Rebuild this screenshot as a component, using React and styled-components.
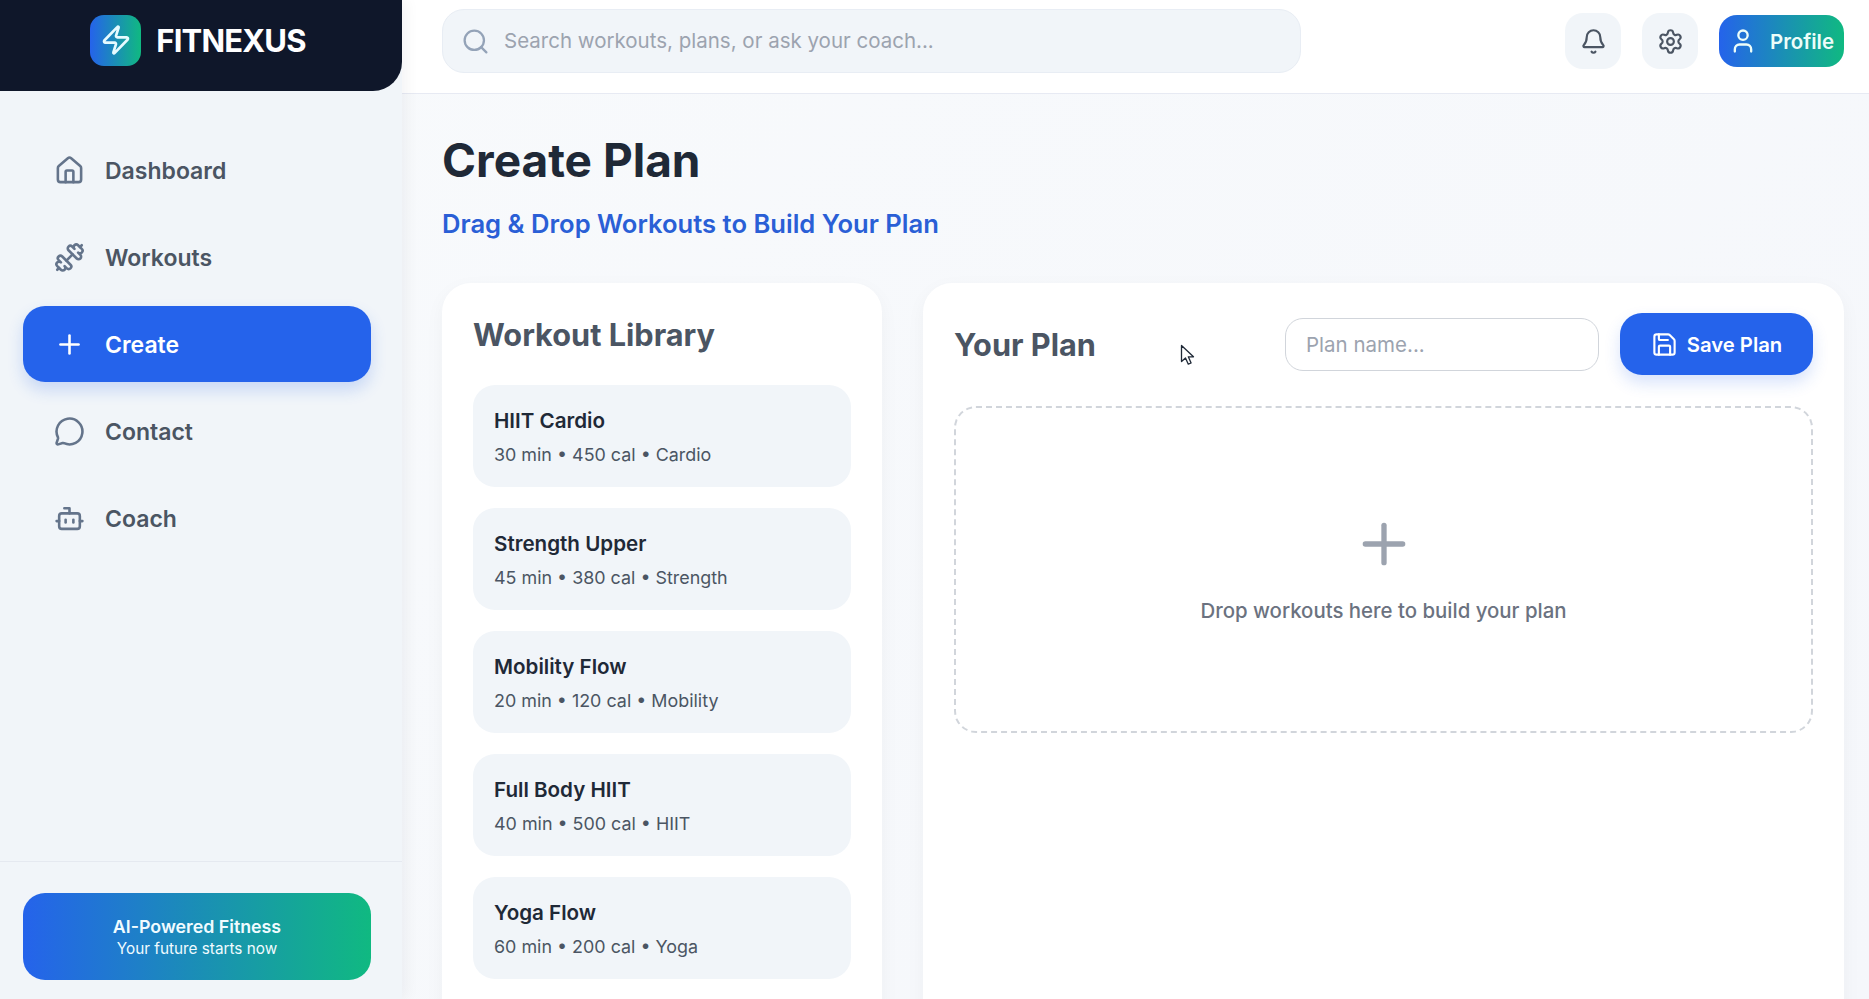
import React from 'react';
import styled, { createGlobalStyle } from 'styled-components';
import { Bell, Bot, Dumbbell, House, MessageCircle, Plus, Save, Search, Settings, User, Zap } from 'lucide-react';

const GlobalStyle = createGlobalStyle`
  * { box-sizing: border-box; }
  html, body { margin: 0; height: 100%; overflow: hidden; }
  body { font-family: Inter, "Liberation Sans", sans-serif; background: #f8fafc; }
  input { font-family: inherit; }
`;

const navItems = [
  { label: 'Dashboard', icon: House },
  { label: 'Workouts', icon: Dumbbell },
  { label: 'Create', icon: Plus, active: true },
  { label: 'Contact', icon: MessageCircle },
  { label: 'Coach', icon: Bot },
];

const workouts = [
  { name: 'HIIT Cardio', meta: '30 min • 450 cal • Cardio' },
  { name: 'Strength Upper', meta: '45 min • 380 cal • Strength' },
  { name: 'Mobility Flow', meta: '20 min • 120 cal • Mobility' },
  { name: 'Full Body HIIT', meta: '40 min • 500 cal • HIIT' },
  { name: 'Yoga Flow', meta: '60 min • 200 cal • Yoga' },
];

const App = () => {
  return (
    <Page>
      <GlobalStyle />
      <Sidebar>
        <Brand>
          <LogoMark>
            <Zap size={32} strokeWidth={2} />
          </LogoMark>
          <BrandName>FITNEXUS</BrandName>
        </Brand>
        <NavList>
          {navItems.map(({ label, icon: Icon, active }) => (
            <NavItem key={label} $active={active}>
              <Icon size={31} strokeWidth={2} />
              <span>{label}</span>
            </NavItem>
          ))}
        </NavList>
        <SidebarFooter>
          <Promo>
            <PromoTitle>AI-Powered Fitness</PromoTitle>
            <PromoText>Your future starts now</PromoText>
          </Promo>
        </SidebarFooter>
      </Sidebar>

      <Main>
        <TopBar>
          <SearchBox>
            <Search size={29} strokeWidth={1.9} />
            <SearchInput placeholder='Search workouts, plans, or ask your coach...' />
          </SearchBox>
          <TopActions>
            <IconButton>
              <Bell size={27} strokeWidth={1.9} />
            </IconButton>
            <IconButton>
              <Settings size={27} strokeWidth={1.9} />
            </IconButton>
            <ProfileButton>
              <User size={28} strokeWidth={2} />
              <span>Profile</span>
            </ProfileButton>
          </TopActions>
        </TopBar>

        <Content>
          <Title>Create Plan</Title>
          <Subtitle>Drag &amp; Drop Workouts to Build Your Plan</Subtitle>
          <Columns>
            <LibraryCard>
              <CardHeading>Workout Library</CardHeading>
              <WorkoutList>
                {workouts.map((w) => (
                  <WorkoutItem key={w.name}>
                    <WorkoutName>{w.name}</WorkoutName>
                    <WorkoutMeta>{w.meta}</WorkoutMeta>
                  </WorkoutItem>
                ))}
              </WorkoutList>
            </LibraryCard>

            <PlanCard>
              <PlanHeader>
                <PlanHeading>Your Plan</PlanHeading>
                <PlanControls>
                  <PlanInput placeholder='Plan name...' />
                  <SaveButton>
                    <Save size={27} strokeWidth={1.9} />
                    <span>Save Plan</span>
                  </SaveButton>
                </PlanControls>
              </PlanHeader>
              <DropZone>
                <Plus size={64} strokeWidth={2} />
                <DropText>Drop workouts here to build your plan</DropText>
              </DropZone>
            </PlanCard>
          </Columns>
        </Content>
      </Main>

      <Cursor width='16' height='22' viewBox='0 0 16 22'>
        <path d='M1.5 1.5v16l4-3.6 2.8 6.3 2.8-1.2-2.8-6.2h5.2z' fill='#fff' stroke='#1f2937' strokeWidth='1.3' strokeLinejoin='round' />
      </Cursor>
    </Page>
  );
};

const Page = styled.div`
  display: flex;
  width: 100%;
  height: 100vh;
  overflow: hidden;
  background: linear-gradient(135deg, #f8fafc, #f5f7fb);
`;
const Sidebar = styled.aside`
  flex: 0 0 402px;
  display: flex;
  flex-direction: column;
  height: 100%;
  background: #f1f5f9;
  box-shadow: 4px 0 14px rgba(15, 23, 42, 0.05);
  position: relative;
  z-index: 2;
`;
const Brand = styled.div`
  flex: 0 0 91px;
  display: flex;
  align-items: center;
  justify-content: center;
  gap: 15px;
  padding: 0 6px 11px 0;
  background: #0f172a;
  border-radius: 0 0 29px 0;
`;
const LogoMark = styled.div`
  width: 51px;
  height: 51px;
  display: flex;
  align-items: center;
  justify-content: center;
  border-radius: 14px;
  color: #e6fbff;
  background: linear-gradient(90deg, #2563eb, #10b981);
`;
const BrandName = styled.div`
  font-size: 31px;
  font-weight: 700;
  letter-spacing: -0.8px;
  color: #fff;
`;
const NavList = styled.nav`
  flex: 1;
  display: flex;
  flex-direction: column;
  gap: 11px;
  padding: 41px 31px 0 23px;
`;
const NavItem = styled.a`
  height: 76px;
  display: flex;
  align-items: center;
  gap: 20px;
  padding: 1px 30px 0 31px;
  border-radius: 22px;
  font-size: 23px;
  font-weight: 600;
  color: ${(p) => (p.$active ? '#fff' : '#4b5563')};
  background: ${(p) => (p.$active ? '#2563eb' : 'transparent')};
  box-shadow: ${(p) => (p.$active ? '0 8px 16px rgba(37, 99, 235, 0.2)' : 'none')};
  svg {
    flex: none;
    color: ${(p) => (p.$active ? '#fff' : '#64748b')};
  }
`;
const SidebarFooter = styled.div`
  flex: 0 0 138px;
  padding: 31px 31px 0 23px;
  border-top: 1px solid #e5e9f0;
`;
const Promo = styled.div`
  height: 87px;
  display: flex;
  flex-direction: column;
  align-items: center;
  justify-content: center;
  border-radius: 22px;
  background: linear-gradient(90deg, #2563eb, #10b981);
  color: #f0fbff;
`;
const PromoTitle = styled.div`
  font-size: 17.8px;
  line-height: 23px;
  font-weight: 600;
`;
const PromoText = styled.div`
  font-size: 15.3px;
  line-height: 21px;
  font-weight: 400;
`;
const Main = styled.main`
  flex: 1;
  min-width: 0;
  display: flex;
  flex-direction: column;
`;
const TopBar = styled.header`
  flex: 0 0 94px;
  display: flex;
  align-items: flex-start;
  justify-content: space-between;
  padding: 9px 25px 0 40px;
  background: #fff;
  border-bottom: 1px solid #e7eaf3;
`;
const SearchBox = styled.div`
  width: 859px;
  height: 64px;
  display: flex;
  align-items: center;
  gap: 14px;
  padding: 0 18px;
  background: #f1f5f9;
  border: 1px solid #e8edf4;
  border-radius: 22px;
  color: #94a3b8;
`;
const SearchInput = styled.input`
  flex: 1;
  border: 0;
  outline: 0;
  padding: 0 0 2px;
  background: transparent;
  font-size: 20.5px;
  color: #374151;
  &::placeholder {
    color: #9ca3af;
    opacity: 1;
  }
`;
const TopActions = styled.div`
  display: flex;
  align-items: center;
  gap: 21px;
  height: 64px;
`;
const IconButton = styled.button`
  width: 56px;
  height: 56px;
  display: flex;
  align-items: center;
  justify-content: center;
  padding: 0;
  border: 0;
  border-radius: 18px;
  background: #f1f5f9;
  color: #4b5563;
`;
const ProfileButton = styled.button`
  width: 125px;
  height: 52px;
  display: flex;
  align-items: center;
  gap: 13px;
  padding: 0 10px 0 10px;
  border: 0;
  border-radius: 18px;
  font-family: inherit;
  font-size: 20.4px;
  font-weight: 600;
  color: #ecfdf9;
  background: linear-gradient(90deg, #2563eb, #10b981);
  svg {
    flex: none;
  }
`;
const Content = styled.div`
  flex: 1;
  min-height: 0;
  display: flex;
  flex-direction: column;
  padding: 37px 25px 0 40px;
`;
const Title = styled.h1`
  margin: 0;
  font-size: 46px;
  line-height: 58px;
  font-weight: 700;
  color: #1f2937;
`;
const Subtitle = styled.p`
  margin: 20px 0 44px;
  font-size: 25.6px;
  line-height: 30px;
  font-weight: 600;
  color: #2a5fd6;
`;
const Columns = styled.div`
  flex: 1;
  display: grid;
  grid-template-columns: 440px 1fr;
  gap: 41px;
  min-height: 0;
`;
const Card = styled.section`
  background: #fff;
  border-radius: 29px;
  box-shadow: 0 6px 20px rgba(15, 23, 42, 0.04);
  height: 800px;
`;
const LibraryCard = styled(Card)`
  padding: 33px 31px;
`;
const PlanCard = styled(Card)`
  padding: 30px 31px;
`;
const CardHeading = styled.h2`
  margin: 0;
  font-size: 30.7px;
  line-height: 38px;
  font-weight: 700;
  color: #4b5563;
`;
const PlanHeading = styled(CardHeading)`
  padding-top: 2px;
`;
const WorkoutList = styled.div`
  display: flex;
  flex-direction: column;
  gap: 21px;
  margin-top: 31px;
`;
const WorkoutItem = styled.div`
  height: 102px;
  padding: 23px 21px;
  background: #f1f5f9;
  border-radius: 22px;
`;
const WorkoutName = styled.div`
  font-size: 20.6px;
  line-height: 26px;
  font-weight: 600;
  color: #1f2937;
`;
const WorkoutMeta = styled.div`
  margin-top: 9px;
  font-size: 17.9px;
  line-height: 24px;
  font-weight: 400;
  color: #4b5563;
`;
const PlanHeader = styled.div`
  display: flex;
  align-items: center;
  justify-content: space-between;
  height: 62px;
`;
const PlanControls = styled.div`
  display: flex;
  align-items: center;
  gap: 21px;
`;
const PlanInput = styled.input`
  width: 314px;
  height: 53px;
  padding: 0 20px;
  border: 1px solid #d1d5db;
  border-radius: 18px;
  outline: 0;
  background: #fff;
  font-size: 20.5px;
  &::placeholder {
    color: #9ca3af;
    opacity: 1;
  }
`;
const SaveButton = styled.button`
  width: 193px;
  height: 62px;
  display: flex;
  align-items: center;
  justify-content: center;
  gap: 9px;
  padding: 0;
  border: 0;
  border-radius: 22px;
  font-family: inherit;
  font-size: 20.3px;
  font-weight: 600;
  color: #fff;
  background: #2563eb;
  box-shadow: 0 8px 16px rgba(37, 99, 235, 0.18);
`;
const DropZone = styled.div`
  height: 327px;
  margin-top: 31px;
  display: flex;
  flex-direction: column;
  align-items: center;
  justify-content: center;
  gap: 21px;
  padding-bottom: 4px;
  border: 2px dashed #d1d5db;
  border-radius: 22px;
  color: #9ca3af;
`;
const DropText = styled.div`
  font-size: 20.4px;
  line-height: 27px;
  font-weight: 500;
  color: #6b7280;
`;
const Cursor = styled.svg`
  position: absolute;
  left: 1180px;
  top: 344px;
  z-index: 5;
`;

export default App;
